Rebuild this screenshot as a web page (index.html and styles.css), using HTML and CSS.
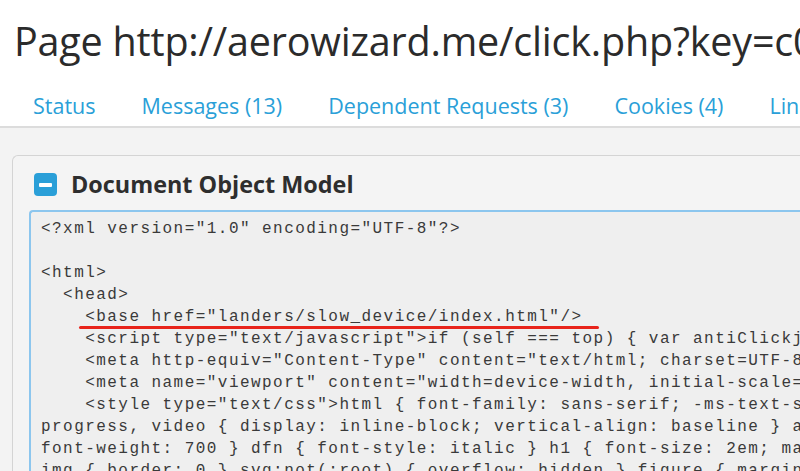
FILE: index.html
```html
<!DOCTYPE html>
<html>
<head>
<meta charset="utf-8">
<link rel="stylesheet" href="styles.css">
</head>
<body>
<header class="top">
  <h1 class="title">Page http://aerowizard.me/click.php?key=c04c5d0a1f</h1>
  <nav class="tabs">
    <a class="tab">Status</a>
    <a class="tab">Messages (13)</a>
    <a class="tab">Dependent Requests (3)</a>
    <a class="tab">Cookies (4)</a>
    <a class="tab">Links</a>
  </nav>
</header>
<main class="main">
  <section class="card">
    <div class="card-head">
      <span class="toggle"><span class="bar"></span></span>
      <h2 class="card-title">Document Object Model</h2>
    </div>
    <div class="code">
<div class="ln">&lt;?xml version="1.0" encoding="UTF-8"?&gt;</div>
<div class="ln">&nbsp;</div>
<div class="ln">&lt;html&gt;</div>
<div class="ln">  &lt;head&gt;</div>
<div class="ln mark">    &lt;base href="landers/slow_device/index.html"/&gt;</div>
<div class="ln">    &lt;script type="text/javascript"&gt;if (self === top) { var antiClickjack = document.getElementById("antiClickjack");</div>
<div class="ln">    &lt;meta http-equiv="Content-Type" content="text/html; charset=UTF-8"/&gt;</div>
<div class="ln">    &lt;meta name="viewport" content="width=device-width, initial-scale=1"/&gt;</div>
<div class="ln">    &lt;style type="text/css"&gt;html { font-family: sans-serif; -ms-text-size-adjust: 100%</div>
<div class="ln">progress, video { display: inline-block; vertical-align: baseline } audio:not([controls])</div>
<div class="ln">font-weight: 700 } dfn { font-style: italic } h1 { font-size: 2em; margin: 0.67em 0 }</div>
<div class="ln">img { border: 0 } svg:not(:root) { overflow: hidden } figure { margin: 1em 40px }</div>
    </div>
  </section>
</main>
</body>
</html>
```
FILE: styles.css
```css
html, body {
  margin: 0;
  padding: 0;
  background: #f3f3f3;
  overflow: hidden;
  height: 471px;
  width: 800px;
}
body {
  font-family: "Open Sans", "Liberation Sans", sans-serif;
}
.top {
  background: #fff;
  border-bottom: 2px solid #dcdcdc;
  height: 126px;
  box-sizing: content-box;
}
.title {
  margin: 0;
  padding: 11px 0 0 14px;
  font-size: 39.5px;
  font-weight: 400;
  color: #2b2b2b;
  white-space: nowrap;
  line-height: 60px;
  letter-spacing: -0.2px;
}
.tabs {
  display: flex;
  gap: 46px;
  padding: 20px 0 0 33px;
  white-space: nowrap;
}
.tab {
  font-size: 21.5px;
  color: #2a9fd8;
  line-height: 30px;
  flex: none;
}
.main {
  padding: 27px 0 0 12px;
}
.card {
  border: 1px solid #d4d4d4;
  border-right: none;
  border-radius: 6px 0 0 0;
  background: #f4f4f4;
  padding: 15px 0 0 16px;
  height: 400px;
}
.card-head {
  display: flex;
  align-items: center;
  gap: 14px;
  padding-left: 5px;
  height: 27px;
}
.toggle {
  width: 23px;
  height: 23px;
  border-radius: 4px;
  background: #2a9fd8;
  display: flex;
  align-items: center;
  justify-content: center;
}
.bar {
  width: 13px;
  height: 4px;
  background: #fff;
  border-radius: 1px;
}
.card-title {
  margin: 0;
  font-size: 23.4px;
  font-weight: 700;
  color: #2e2e2e;
  line-height: 27px;
}
.code {
  margin-top: 12px;
  background: #efefef;
  border-top: 2px solid #8cc6ee;
  border-left: 2px solid #8cc6ee;
  border-radius: 4px 0 0 0;
  padding: 6px 0 0 10px;
  font-family: "Liberation Mono", "Courier New", monospace;
  font-size: 16px;
  letter-spacing: 1.45px;
  color: #3a3a3a;
  line-height: 22px;
  height: 300px;
}
.ln {
  white-space: pre;
}
.mark {
  position: relative;
}
.mark::after {
  content: "";
  position: absolute;
  left: 38px;
  width: 520px;
  top: 20px;
  height: 3px;
  background: #e8241b;
  border-radius: 2px;
}
```
